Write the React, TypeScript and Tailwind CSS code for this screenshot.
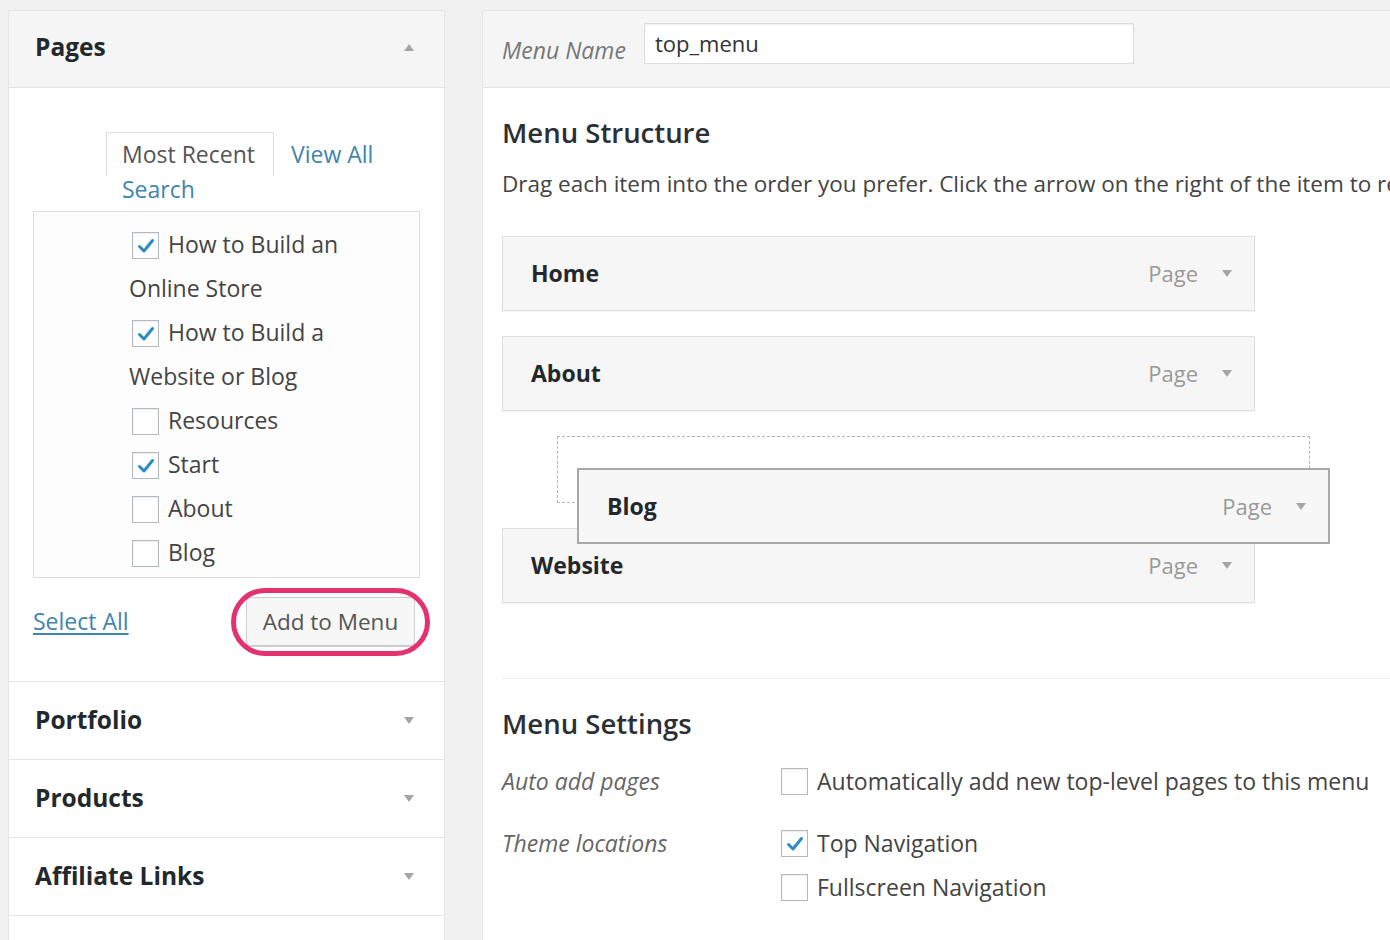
const Arrow = ({ up = false }: { up?: boolean }) => (
  <svg width="12" height="9" viewBox="0 0 12 9" className="shrink-0">
    <path d={up ? "M6 1 L11 8 L1 8 Z" : "M1 1 L11 1 L6 8 Z"} fill="#a5a5a5" />
  </svg>
);

const Check = () => (
  <svg width="20" height="18" viewBox="0 0 20 18" className="absolute left-[3px] top-[4px]">
    <path d="M3.5 9.5 L8 14 L16.5 3.5" fill="none" stroke="#2b8dc4" strokeWidth="3" strokeLinecap="round" strokeLinejoin="round" />
  </svg>
);

// box without its own line box, so it sits in a text line without growing it
const Checkbox = ({ checked = false, className = "" }: { checked?: boolean; className?: string }) => (
  <span
    className={`relative inline-block h-[27px] w-[27px] shrink-0 border border-[#b4b9be] bg-white shadow-[inset_0_1px_2px_rgba(0,0,0,0.08)] ${className}`}
  >
    {checked && <Check />}
  </span>
);

const pages = [
  { label: "How to Build an Online Store", checked: true },
  { label: "How to Build a Website or Blog", checked: true },
  { label: "Resources", checked: false },
  { label: "Start", checked: true },
  { label: "About", checked: false },
  { label: "Blog", checked: false },
];

const Section = ({ title }: { title: string }) => (
  <div className="flex h-[78px] items-center justify-between border-t border-[#e5e5e5] bg-white pl-[26px] pr-[29px]">
    <span className="text-[24.5px] font-bold text-[#23282d]">{title}</span>
    <Arrow />
  </div>
);

const MenuItem = ({ title }: { title: string }) => (
  <div className="flex h-[75px] w-[753px] items-center justify-between border border-[#dfdfdf] bg-[#f6f6f6] pl-[28px] pr-[21px] shadow-[0_1px_1px_rgba(0,0,0,0.04)]">
    <span className="text-[23px] font-bold text-[#23282d]">{title}</span>
    <span className="flex items-center gap-[23px]">
      <span className="text-[22px] text-[#999]">Page</span>
      <Arrow />
    </span>
  </div>
);

export default function App() {
  return (
    <div className="flex h-[940px] w-[1390px] overflow-hidden bg-[#f1f1f1] font-['Open_Sans',sans-serif] text-[#444]">
      {/* left column */}
      <div className="ml-[8px] mt-[10px] w-[437px] shrink-0 border-x border-t border-[#e5e5e5] bg-white">
        <div className="flex h-[77px] items-center justify-between border-b border-[#e5e5e5] bg-[#f5f5f5] pb-[3px] pl-[26px] pr-[29px]">
          <span className="text-[24.5px] font-bold text-[#23282d]">Pages</span>
          <Arrow up />
        </div>

        <div className="h-[593px] px-[24px] pt-[44px]">
          <div className="flex h-[44px] items-end pl-[73px]">
            <span className="flex h-[44px] items-center border-x border-t border-[#dddddd] pl-[15px] pr-[18px] text-[23px] text-[#555]">
              Most Recent
            </span>
            <span className="ml-[17px] flex h-[44px] items-center text-[23px] text-[#3f85ad]">View All</span>
          </div>
          <div className="pl-[89px] text-[23px] leading-[26px] text-[#3f85ad]">Search</div>

          <div className="mt-[9px] h-[367px] border border-[#dddddd] bg-[#fdfdfd] pl-[95px] pt-[10px]">
            {pages.map((p) => (
              <div key={p.label} className="w-[262px] text-[23px] leading-[44px] text-[#444]">
                <Checkbox checked={p.checked} className="ml-[3px] mr-[9px] align-[-6px]" />
                {p.label}
              </div>
            ))}
          </div>

          <div className="mt-[19px] flex items-center justify-between">
            <span className="text-[23px] text-[#3f85ad] underline underline-offset-[3px]">Select All</span>
            <span className="relative mr-[5px]">
              <span className="flex h-[49px] w-[169px] items-center justify-center rounded-[4px] border border-[#cccccc] bg-[#f7f7f7] text-[22.5px] text-[#555] shadow-[0_1px_0_#ccc]">
                Add to Menu
              </span>
              <span className="pointer-events-none absolute -bottom-[10px] -left-[15px] -right-[15px] -top-[9px] rounded-full border-[5px] border-[#e4326e]" />
            </span>
          </div>
        </div>

        <Section title="Portfolio" />
        <Section title="Products" />
        <Section title="Affiliate Links" />
        <div className="h-[40px] border-t border-[#e5e5e5] bg-white" />
      </div>

      {/* right column */}
      <div className="ml-[37px] mt-[10px] w-[1000px] shrink-0 border-l border-t border-[#e5e5e5] bg-white">
        <div className="flex h-[77px] items-start border-b border-[#e5e5e5] bg-[#f5f5f5] pl-[19px] pt-[12px]">
          <span className="mt-[10px] text-[23px] italic text-[#777]">Menu Name</span>
          <span className="ml-[18px] flex h-[41px] w-[490px] items-center border border-[#dddddd] bg-white px-[10px] text-[22px] text-[#333] shadow-[inset_0_1px_2px_rgba(0,0,0,0.07)]">
            top_menu
          </span>
        </div>

        <div className="pl-[19px] pt-[29px]">
          <h2 className="text-[27.5px] font-semibold leading-[32px] text-[#2c3035]">Menu Structure</h2>
          <p className="mt-[20px] whitespace-nowrap text-[22.5px] leading-[30px] text-[#444]">
            Drag each item into the order you prefer. Click the arrow on the right of the item to reveal additional configuration options.
          </p>

          <div className="relative mt-[37px] flex flex-col gap-[25px]">
            <MenuItem title="Home" />
            <MenuItem title="About" />
            <div className="ml-[55px] h-[67px] w-[753px] border border-dashed border-[#b5b5b5]" />
            <MenuItem title="Website" />
            <div className="absolute left-[75px] top-[232px] flex h-[76px] w-[753px] items-center justify-between border-2 border-[#a8a8a8] bg-[#f7f7f7] pl-[28px] pr-[21px]">
              <span className="text-[23px] font-bold text-[#23282d]">Blog</span>
              <span className="flex items-center gap-[23px]">
                <span className="text-[22px] text-[#999]">Page</span>
                <Arrow />
              </span>
            </div>
          </div>

          <div className="mt-[75px] border-t border-[#eeeeee]" />

          <h2 className="mt-[29px] text-[27.5px] font-semibold leading-[32px] text-[#2c3035]">Menu Settings</h2>

          <div className="mt-[19px] flex">
            <span className="w-[279px] text-[23px] italic leading-[44px] text-[#666]">Auto add pages</span>
            <span className="flex items-center gap-[9px] text-[23px] leading-[44px] text-[#444]">
              <Checkbox />
              Automatically add new top-level pages to this menu
            </span>
          </div>

          <div className="mt-[18px] flex">
            <span className="w-[279px] text-[23px] italic leading-[44px] text-[#666]">Theme locations</span>
            <div className="flex flex-col">
              <span className="flex items-center gap-[9px] text-[23px] leading-[44px] text-[#444]">
                <Checkbox checked />
                Top Navigation
              </span>
              <span className="flex items-center gap-[9px] text-[23px] leading-[44px] text-[#444]">
                <Checkbox />
                Fullscreen Navigation
              </span>
            </div>
          </div>
        </div>
      </div>
    </div>
  );
}
